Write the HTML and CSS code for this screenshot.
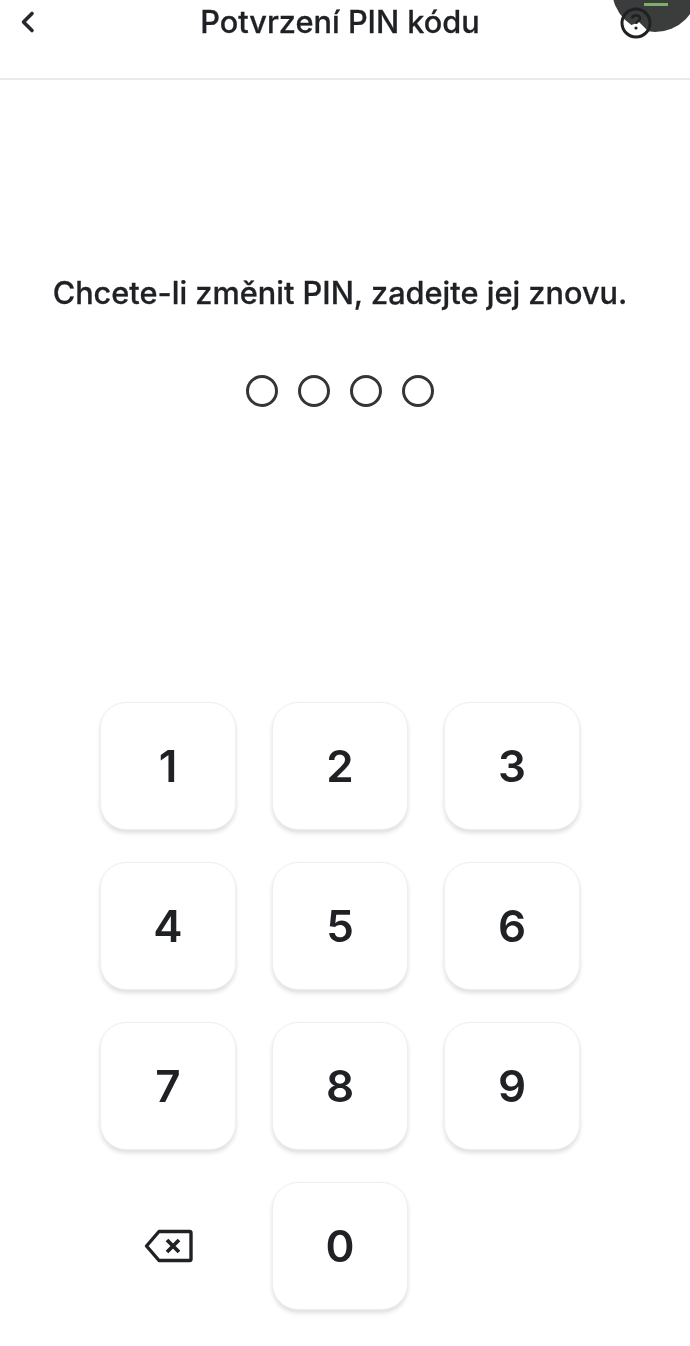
FILE: index.html
```html
<!DOCTYPE html>
<html lang="cs">
<head>
<meta charset="utf-8">
<title>Potvrzení PIN kódu</title>
<link rel="stylesheet" href="styles.css">
</head>
<body>
<div class="screen">
  <header class="header">
    <button class="icon-btn" aria-label="Zpět">
      <svg width="18" height="24" viewBox="0 0 18 24"><path d="M14 3.500 L5.500 12 L14 20.500" fill="none" stroke="#26282b" stroke-width="3.600" stroke-linecap="round" stroke-linejoin="round"/></svg>
    </button>
    <h1 class="title">Potvrzení PIN kódu</h1>
    <button class="icon-btn help" aria-label="Nápověda">
      <svg width="34" height="34" viewBox="0 0 34 34"><path d="M5 22 A13 13 0 0 0 28 24 L20 16 Z" fill="#fff"/><circle cx="17" cy="17" r="14" fill="none" stroke="#1f2124" stroke-width="3"/><path d="M13 12.500c.5-2.500 2.500-3.300 4.500-3.100 2.300.2 3.700 1.500 3.500 3.400-.2 2.400-3.800 2.600-4 5" fill="none" stroke="#1f2124" stroke-width="2.600"/><circle cx="17" cy="22" r="1.600" fill="#1f2124"/></svg>
    </button>
  </header>
  <div class="blob" aria-hidden="true"><span class="blob-line"></span></div>
  <main class="main">
    <p class="prompt">Chcete-li změnit PIN, zadejte jej znovu.</p>
    <div class="dots">
      <span class="dot"></span><span class="dot"></span><span class="dot"></span><span class="dot"></span>
    </div>
    <div class="keypad">
      <button class="key">1</button>
      <button class="key">2</button>
      <button class="key">3</button>
      <button class="key">4</button>
      <button class="key">5</button>
      <button class="key">6</button>
      <button class="key">7</button>
      <button class="key">8</button>
      <button class="key">9</button>
      <button class="key key-plain" aria-label="Smazat">
        <svg class="backspace" width="50" height="36" viewBox="0 0 50 36"><path d="M15 3.500 H45.500 A1.500 1.500 0 0 1 47 5 V31 A1.500 1.500 0 0 1 45.500 32.500 H15 L2.500 18 Z" fill="none" stroke="#1f2124" stroke-width="3.400" stroke-linejoin="round"/><path d="M23 12 L35 24 M35 12 L23 24" fill="none" stroke="#1f2124" stroke-width="3.800"/></svg>
      </button>
      <button class="key">0</button>
    </div>
  </main>
</div>
</body>
</html>
```
FILE: styles.css
```css
* { box-sizing: border-box; }
html, body { margin: 0; padding: 0; background: #fff; }
body { font-family: Inter, "Noto Sans", sans-serif; color: #1f2124; }
.screen { position: relative; width: 690px; height: 1346px; overflow: hidden; filter: blur(0.7px); }
.header {
  height: 80px;
  padding: 0 20px 34px 18px;
  border-bottom: 2px solid #e9e9e9;
  display: flex;
  align-items: center;
  justify-content: space-between;
  position: relative;
}
.icon-btn { border: 0; background: none; padding: 0; display: flex; align-items: center; justify-content: center; }
.help { position: relative; z-index: 2; margin-right: 17px; margin-top: 2px; }
.title {
  margin: 0;
  font-size: 30.700px;
  font-weight: 500;
  line-height: 44px;
  position: absolute;
  left: 0;
  right: 10px;
  top: 0;
  text-align: center;
  -webkit-text-stroke: 0.3px #1f2124;
}
.blob {
  position: absolute;
  top: -54px;
  left: 612px;
  width: 86px;
  height: 86px;
  border-radius: 50%;
  background: #3a3d3c;
  z-index: 1;
}
.blob-line { position: absolute; left: 32px; top: 57px; width: 24px; height: 3px; background: #7fb069; }
.main { display: flex; flex-direction: column; align-items: center; padding-right: 10px; }
.prompt {
  margin: 194px 0 0;
  font-size: 30.700px;
  font-weight: 500;
  line-height: 38px;
  text-align: center;
  white-space: nowrap;
  -webkit-text-stroke: 0.3px #1f2124;
}
.dots { display: flex; gap: 20px; margin-top: 63px; }
.dot { width: 32px; height: 32px; border: 3px solid #333538; border-radius: 50%; }
.keypad {
  display: grid;
  grid-template-columns: repeat(3, 136px);
  grid-auto-rows: 128px;
  column-gap: 36px;
  row-gap: 32px;
  margin-top: 295px;
}
.key {
  border: 1px solid #eeeeee;
  border-radius: 26px;
  background: #fff;
  box-shadow: 0 3px 4px rgba(0,0,0,.13);
  font-family: inherit;
  font-size: 44px;
  font-weight: 600;
  color: #1f2124;
  padding: 0;
  display: flex;
  align-items: center;
  justify-content: center;
}
.key-plain { border: 0; box-shadow: none; background: none; }
.backspace { margin-left: 2px; }
```
